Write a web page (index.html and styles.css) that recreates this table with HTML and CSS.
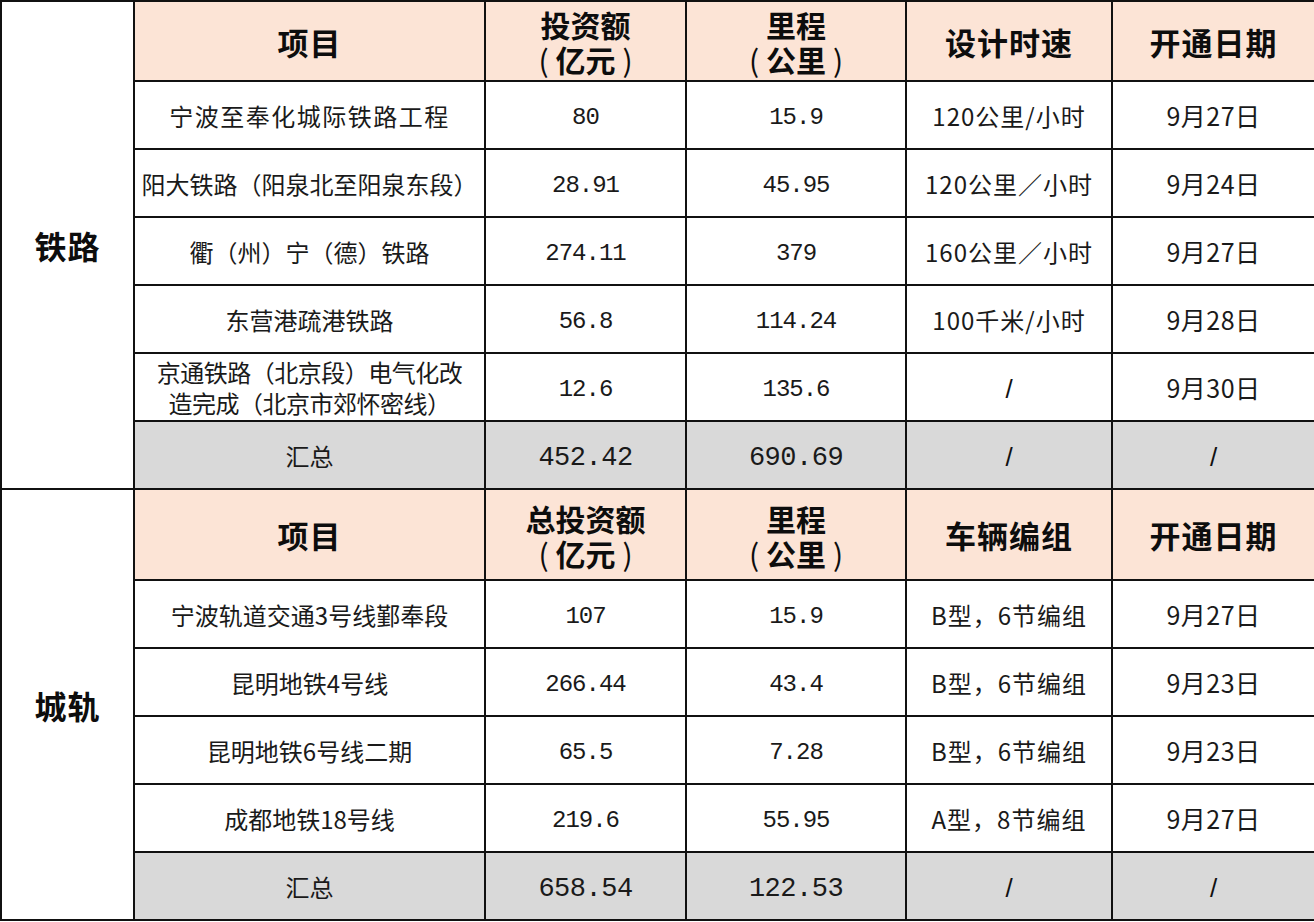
FILE: index.html
```html
<!DOCTYPE html>
<html lang="zh-CN">
<head>
<meta charset="utf-8">
<title>铁路与城轨</title>
<link rel="stylesheet" href="styles.css">
</head>
<body>
<table class="sheet">
  <colgroup>
    <col class="c1"><col class="c2"><col class="c3"><col class="c4"><col class="c5"><col class="c6">
  </colgroup>
  <tbody>
    <tr class="head head-first">
      <td class="cat" rowspan="8">铁路</td>
      <th>项目</th>
      <th class="two"><span class="ln">投资额</span><span class="ln"><span class="paren">(</span>亿元<span class="paren">)</span></span></th>
      <th class="two"><span class="ln">里程</span><span class="ln"><span class="paren">(</span>公里<span class="paren">)</span></span></th>
      <th>设计时速</th>
      <th>开通日期</th>
    </tr>
    <tr class="row">
      <td class="name wide">宁波至奉化城际铁路工程</td>
      <td class="num">80</td>
      <td class="num">15.9</td>
      <td class="mix">120公里/小时</td>
      <td class="date">9月27日</td>
    </tr>
    <tr class="row">
      <td class="name">阳大铁路（阳泉北至阳泉东段）</td>
      <td class="num">28.91</td>
      <td class="num">45.95</td>
      <td class="mix">120公里／小时</td>
      <td class="date">9月24日</td>
    </tr>
    <tr class="row">
      <td class="name">衢（州）宁（德）铁路</td>
      <td class="num">274.11</td>
      <td class="num">379</td>
      <td class="mix">160公里／小时</td>
      <td class="date">9月27日</td>
    </tr>
    <tr class="row">
      <td class="name">东营港疏港铁路</td>
      <td class="num">56.8</td>
      <td class="num">114.24</td>
      <td class="mix">100千米/小时</td>
      <td class="date">9月28日</td>
    </tr>
    <tr class="row">
      <td class="name tight">京通铁路（北京段）电气化改<br>造完成（北京市郊怀密线）</td>
      <td class="num">12.6</td>
      <td class="num">135.6</td>
      <td class="slash">/</td>
      <td class="date">9月30日</td>
    </tr>
    <tr class="row total">
      <td class="name">汇总</td>
      <td class="num big">452.42</td>
      <td class="num big">690.69</td>
      <td class="slash">/</td>
      <td class="slash">/</td>
    </tr>
  </tbody>
  <tbody>
    <tr class="head head-second">
      <td class="cat" rowspan="7">城轨</td>
      <th>项目</th>
      <th class="two"><span class="ln">总投资额</span><span class="ln"><span class="paren">(</span>亿元<span class="paren">)</span></span></th>
      <th class="two"><span class="ln">里程</span><span class="ln"><span class="paren">(</span>公里<span class="paren">)</span></span></th>
      <th>车辆编组</th>
      <th>开通日期</th>
    </tr>
    <tr class="row">
      <td class="name">宁波轨道交通3号线鄞奉段</td>
      <td class="num">107</td>
      <td class="num">15.9</td>
      <td class="mix">B型，6节编组</td>
      <td class="date">9月27日</td>
    </tr>
    <tr class="row">
      <td class="name">昆明地铁4号线</td>
      <td class="num">266.44</td>
      <td class="num">43.4</td>
      <td class="mix">B型，6节编组</td>
      <td class="date">9月23日</td>
    </tr>
    <tr class="row">
      <td class="name">昆明地铁6号线二期</td>
      <td class="num">65.5</td>
      <td class="num">7.28</td>
      <td class="mix">B型，6节编组</td>
      <td class="date">9月23日</td>
    </tr>
    <tr class="row">
      <td class="name">成都地铁18号线</td>
      <td class="num">219.6</td>
      <td class="num">55.95</td>
      <td class="mix">A型，8节编组</td>
      <td class="date">9月27日</td>
    </tr>
    <tr class="row total">
      <td class="name">汇总</td>
      <td class="num big">658.54</td>
      <td class="num big">122.53</td>
      <td class="slash">/</td>
      <td class="slash">/</td>
    </tr>
  </tbody>
</table>
</body>
</html>
```

FILE: styles.css
```css
html, body {
  margin: 0;
  padding: 0;
  background: #ffffff;
}

body {
  font-family: "Noto Sans CJK SC", "Noto Sans", sans-serif;
  color: #111111;
}

.sheet {
  border-collapse: collapse;
  table-layout: fixed;
  width: 1314px;
  margin: 0;
}

.c1 { width: 133px; }
.c2 { width: 351px; }
.c3 { width: 201px; }
.c4 { width: 220px; }
.c5 { width: 206px; }
.c6 { width: 203px; }

.sheet td,
.sheet th {
  border: 2px solid #111111;
  padding: 0;
  text-align: center;
  vertical-align: middle;
  overflow: hidden;
  white-space: nowrap;
}

.sheet .head th {
  background: #fce4d6;
  font-weight: 700;
  font-size: 31px;
  letter-spacing: 1px;
  color: #0d0d0d;
}

.sheet .head th.two {
  font-size: 30px;
  letter-spacing: 0;
  padding-top: 2px;
}

.ln {
  display: block;
  height: 35px;
  line-height: 35px;
}

.paren {
  display: inline-block;
  width: 24px;
  text-align: center;
  font-weight: 400;
}

.head-first { height: 80px; }
.head-second { height: 91px; }

.row { height: 68px; }

.sheet .cat {
  background: #ffffff;
  font-weight: 700;
  font-size: 32px;
  letter-spacing: 1px;
  color: #0d0d0d;
}

.sheet .name {
  font-size: 24px;
  font-weight: 400;
  color: #1a1a1a;
}

.sheet .name.wide { letter-spacing: 1.5px; }

.sheet .name.tight {
  line-height: 31px;
  white-space: normal;
  letter-spacing: -0.5px;
}

.sheet .num {
  font-family: "Liberation Mono", "DejaVu Sans Mono", monospace;
  font-size: 24px;
  letter-spacing: -1px;
  padding-top: 5px;
  color: #1a1a1a;
}

.sheet .num.big {
  font-size: 27px;
  letter-spacing: -0.5px;
}

.sheet .mix {
  font-size: 24px;
  letter-spacing: 1px;
  color: #1a1a1a;
}

.sheet .date {
  font-size: 25px;
  letter-spacing: 0.5px;
  color: #1a1a1a;
}

.sheet .slash {
  font-family: "Liberation Sans", sans-serif;
  font-size: 26px;
  padding-top: 4px;
}

.sheet .total td {
  background: #d9d9d9;
}
```
